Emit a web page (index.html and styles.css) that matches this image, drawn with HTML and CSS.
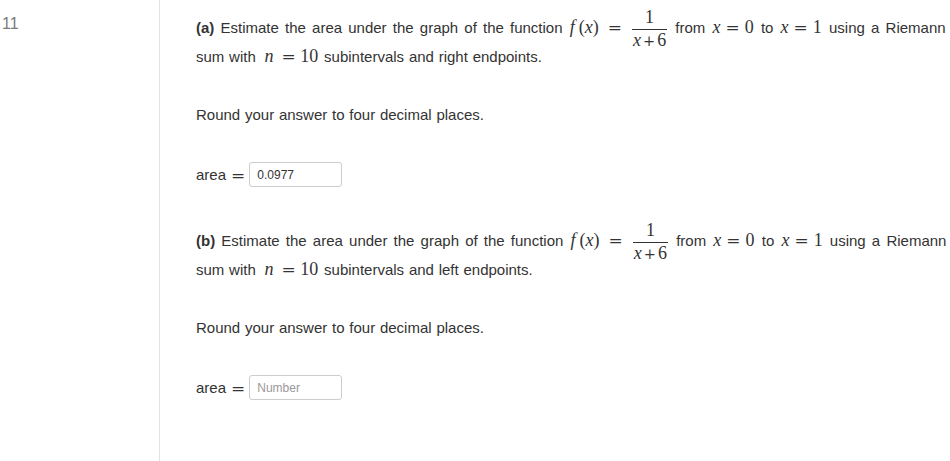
FILE: index.html
```html
<!DOCTYPE html>
<html>
<head>
<meta charset="utf-8">
<link rel="stylesheet" href="styles.css">
</head>
<body>
<div class="question">
  <div class="qnum">11</div>
  <div class="qbody">
    <div class="part">
      <p class="prompt lead"><b>(a)</b> Estimate the area under the graph of the function <span class="m"><i class="f">f</i>(<i>x</i>)<span class="rel wide">=</span><span class="frac"><span class="num">1</span><span class="den"><i>x</i><span class="bin">+</span>6</span></span></span> from <span class="m"><i>x</i><span class="rel">=</span>0</span> to <span class="m"><i>x</i><span class="rel">=</span>1</span> using a Riemann</p>
      <p class="prompt">sum with <span class="m"><i>n</i><span class="rel loose">=</span>10</span> subintervals and right endpoints.</p>
      <p class="round">Round your answer to four decimal places.</p>
      <div class="answer"><span class="label">area</span><span class="m"><span class="rel">=</span></span><input class="box" type="text" value="0.0977"></div>
    </div>
    <div class="part">
      <p class="prompt lead"><b>(b)</b> Estimate the area under the graph of the function <span class="m"><i class="f">f</i>(<i>x</i>)<span class="rel wide">=</span><span class="frac"><span class="num">1</span><span class="den"><i>x</i><span class="bin">+</span>6</span></span></span> from <span class="m"><i>x</i><span class="rel">=</span>0</span> to <span class="m"><i>x</i><span class="rel">=</span>1</span> using a Riemann</p>
      <p class="prompt">sum with <span class="m"><i>n</i><span class="rel loose">=</span>10</span> subintervals and left endpoints.</p>
      <p class="round">Round your answer to four decimal places.</p>
      <div class="answer"><span class="label">area</span><span class="m"><span class="rel">=</span></span><input class="box" type="text" placeholder="Number"></div>
    </div>
  </div>
</div>
</body>
</html>
```
FILE: styles.css
```css
html, body {
  margin: 0;
  padding: 0;
  background: #fff;
}
body {
  font-family: "Liberation Sans", Arial, sans-serif;
  font-size: 15px;
  color: #333;
  width: 950px;
  height: 461px;
  overflow: hidden;
}
.question {
  display: flex;
  height: 461px;
}
.qnum {
  width: 157px;
  padding-left: 2px;
  padding-top: 15px;
  font-size: 16px;
  color: #7a7a7a;
  flex-shrink: 0;
}
.qbody {
  border-left: 1px solid #e3e3e3;
  padding-left: 36px;
  padding-right: 2px;
  flex: 1;
}
.part {
  padding-top: 13px;
}
.part + .part {
  padding-top: 39px;
}
p {
  margin: 0;
}
.prompt {
  line-height: 29px;
  word-spacing: 0.6px;
  white-space: nowrap;
}
.prompt.lead {
  word-spacing: 2px;
}
.m {
  font-family: "Liberation Serif", "Times New Roman", serif;
  font-size: 18px;
  line-height: 1;
  word-spacing: 0;
  white-space: nowrap;
  margin: 0 1px;
}
.m i {
  font-style: italic;
}
.prompt:not(.lead) .m {
  margin-left: 4px;
}
.f {
  margin-right: 4px;
}
.rel {
  font-family: "DejaVu Serif", serif;
  font-size: 17px;
  margin: 0 5px;
}
.rel.wide {
  margin: 0 10px 0 9px;
}
.rel.loose {
  margin: 0 4.5px 0 8px;
}
.bin {
  font-family: "DejaVu Serif", serif;
  font-size: 14.5px;
  margin: 0 2px;
}
.frac {
  display: inline-flex;
  flex-direction: column;
  align-items: center;
  vertical-align: 10px;
  line-height: 17px;
  margin: -12px 1px -14px 0;
}
.num {
  padding: 0 2px 3px;
}
.den {
  border-top: 1px solid #333;
  padding: 2px 1px 0;
}
.round {
  margin-top: 29px;
  line-height: 29px;
  word-spacing: 0.6px;
}
.answer {
  margin-top: 33px;
  display: flex;
  align-items: center;
  height: 25px;
}
.answer .m {
  margin: 0;
}
.answer .rel {
  margin: 0 4px 0 5px;
}
.box {
  width: 93px;
  height: 25px;
  box-sizing: border-box;
  border: 1px solid #ccc;
  border-radius: 3px;
  padding: 0 7px;
  font-family: "Liberation Sans", Arial, sans-serif;
  font-size: 12px;
  color: #333;
  outline: none;
  margin: 0;
}
.box::placeholder {
  color: #999;
}
```
